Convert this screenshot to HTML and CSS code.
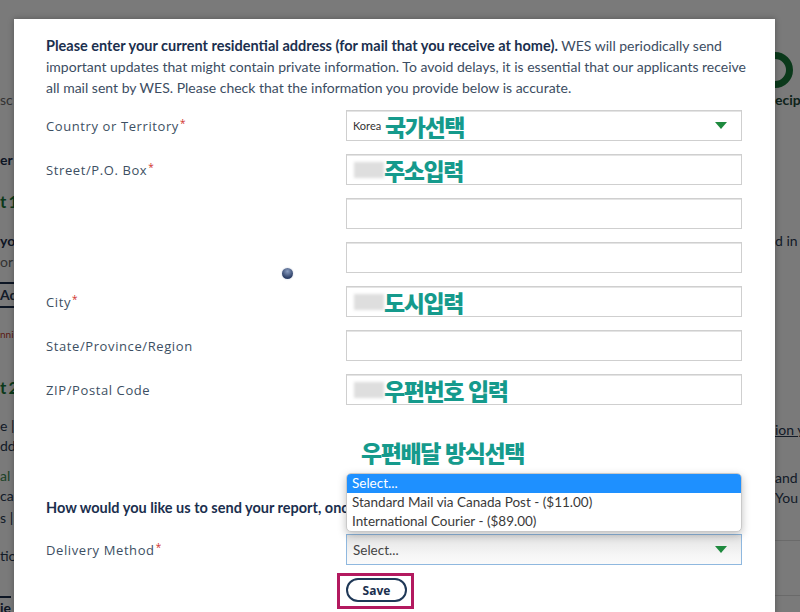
FILE: index.html
```html
<!DOCTYPE html>
<html lang="ko">
<head>
<meta charset="utf-8">
<title>Address</title>
<link rel="stylesheet" href="styles.css">
</head>
<body>
<div class="page">
  <div class="strip strip-left">
    <div class="bl bl1 muted">sc</div>
    <div class="bl bl2 bold">er</div>
    <div class="bl bl3 green big">t 1</div>
    <div class="bl bl4 bold">yo</div>
    <div class="bl bl5 muted">or</div>
    <div class="bl bl6 tab">Ad</div>
    <div class="bl bl7 red">nni</div>
    <div class="bl bl8 green big">t 2</div>
    <div class="bl bl9">e |</div>
    <div class="bl bl10">dd</div>
    <div class="bl bl11 green-l">al</div>
    <div class="bl bl12">ca</div>
    <div class="bl bl13">s |</div>
    <div class="bl bl14">tio</div>
    <div class="bl bl15 bold rule">ie</div>
  </div>
  <div class="page-mid"></div>
  <div class="strip strip-right">
    <div class="ring"></div>
    <div class="br br1 bold">ecip</div>
    <div class="br br2">d in</div>
    <div class="br br3 uline">ion y</div>
    <div class="br br4">and</div>
    <div class="br br5">You</div>
    <div class="br br6 hr"></div>
    <div class="br br7 hr"></div>
  </div>
</div>
<div class="overlay"></div>

<div class="modal">
  <p class="intro"><b>Please enter your current residential address (for mail that you receive at home).</b> WES will periodically send important updates that might contain private information. To avoid delays, it is essential that our applicants receive all mail sent by WES. Please check that the information you provide below is accurate.</p>

  <div class="form">
    <div class="label">Country or Territory<span class="req">*</span></div>
    <div class="field select"><span class="val">Korea</span><span class="note">국가선택</span><span class="arrow"></span></div>

    <div class="label">Street/P.O. Box<span class="req">*</span></div>
    <div class="field"><span class="blur"></span><span class="note">주소입력</span></div>

    <div class="label"></div>
    <div class="field"></div>

    <div class="label"></div>
    <div class="field"></div>

    <div class="label">City<span class="req">*</span></div>
    <div class="field"><span class="blur"></span><span class="note">도시입력</span></div>

    <div class="label">State/Province/Region</div>
    <div class="field"></div>

    <div class="label">ZIP/Postal Code</div>
    <div class="field"><span class="blur"></span><span class="note">우편번호 입력</span></div>
  </div>

  <div class="note-row"><span class="note">우편배달 방식선택</span></div>

  <p class="question">How would you like us to send your report, once it is complete?</p>

  <div class="form delivery">
    <div class="label">Delivery Method<span class="req">*</span></div>
    <div class="field select open">
      <span class="val2">Select...</span><span class="arrow"></span>
      <ul class="options">
        <li class="sel">Select...</li>
        <li>Standard Mail via Canada Post - ($11.00)</li>
        <li>International Courier - ($89.00)</li>
      </ul>
    </div>
  </div>

  <div class="actions">
    <div class="spacer"></div>
    <div class="save-wrap"><button class="save">Save</button></div>
  </div>

  <div class="spinner"></div>
</div>
</body>
</html>
```

FILE: styles.css
```css
html, body {
  margin: 0;
  padding: 0;
}
body {
  width: 800px;
  height: 612px;
  overflow: hidden;
  position: relative;
  font-family: Lato, "Noto Sans", sans-serif;
  background: #fff;
}

/* background page */
.page {
  display: flex;
  height: 612px;
  background: #fff;
}
.strip {
  overflow: hidden;
  display: flex;
  flex-direction: column;
  font-size: 14px;
  color: #2a3b55;
  white-space: nowrap;
  align-items: flex-start;
}
.strip-left { width: 14px; }
.page-mid { flex: 1; }
.strip-right { width: 25px; }
.bl, .br { line-height: 20px; height: 20px; }
.muted { color: #6b6b6b; }
.bold { font-weight: 700; color: #1d2f4d; }
.green { color: #17773a; font-weight: 700; }
.green-l { color: #3c8a50; }
.big { font-size: 17px; line-height: 24px; height: 24px; letter-spacing: -1px; }
.red { color: #c0392b; font-size: 10px; }
.bl1 { margin-top: 90px; }
.bl2 { margin-top: 40px; }
.bl3 { margin-top: 20px; }
.bl4 { margin-top: 17px; }
.bl5 { margin-top: 1px; }
.bl6 { margin-top: 10px; }
.tab {
  border-top: 2px solid #1d2f4d;
  border-bottom: 2px solid #1d2f4d;
  font-weight: 700;
  height: 22px;
  line-height: 22px;
  width: 20px;
}
.bl7 { margin-top: 16px; }
.bl8 { margin-top: 32px; }
.bl9 { margin-top: 16px; }
.bl10 { margin-top: 0; }
.bl11 { margin-top: 10px; }
.bl12 { margin-top: 0; }
.bl13 { margin-top: 2px; }
.bl14 { margin-top: 18px; }
.bl15 { margin-top: 30px; }
.rule { border-top: 2px solid #1d2f4d; }

.ring {
  width: 22px;
  height: 22px;
  border: 7px solid #17773a;
  border-radius: 50%;
  margin-top: 52px;
  margin-left: -18px;
  flex: none;
}
.br1 { margin-top: 2px; color: #1d4a3a; }
.br2 { margin-top: 121px; }
.br3 { margin-top: 169px; }
.uline { text-decoration: underline; }
.br4 { margin-top: 28px; }
.br5 { margin-top: 0; }
.hr { height: 0; width: 30px; border-top: 1px solid #ddd; }
.br6 { margin-top: 32px; }
.br7 { margin-top: 54px; }

.overlay {
  position: absolute;
  inset: 0;
  background: rgba(0, 0, 0, 0.52);
}

/* modal */
.modal {
  position: absolute;
  left: 14px;
  top: 19px;
  width: 761px;
  height: 620px;
  box-sizing: border-box;
  background: #fff;
  padding: 16px 32px 0 32px;
  box-shadow: 0 0 6px rgba(0,0,0,0.3);
}
.intro {
  margin: 0;
  font-size: 14px;
  line-height: 21px;
  color: #3c4d62;
  width: 700px;
}
.intro b {
  font-size: 14.5px;
}
.intro b, .question {
  color: #1b2f4e;
  font-weight: 700;
}
.form {
  display: grid;
  grid-template-columns: 300px 396px;
  grid-auto-rows: 31px;
  row-gap: 13px;
  margin-top: 12px;
}
.label {
  display: flex;
  align-items: center;
  font-family: "Open Sans", sans-serif;
  font-size: 13px;
  letter-spacing: 0.6px;
  color: #3d4f63;
}
.req {
  color: #d0312d;
  font-size: 10px;
  align-self: flex-start;
  margin-top: 6px;
  margin-left: 1px;
}
.field {
  position: relative;
  display: flex;
  align-items: center;
  box-sizing: border-box;
  height: 31px;
  border: 1px solid #cfcfcf;
  box-shadow: inset 0 1px 0 #e4e4e4;
  padding: 0 14px 0 6px;
  background: #fff;
}
.val {
  font-size: 11px;
  color: #333;
  width: 32px;
}
.blur {
  width: 30px;
  height: 16px;
  margin-left: 1px;
  background: #dedede;
  filter: blur(1.5px);
}
.note {
  font-family: "Noto Sans CJK KR", sans-serif;
  font-weight: 900;
  font-size: 23px;
  letter-spacing: -1.4px;
  color: #159a8c;
  line-height: 30px;
}
.arrow {
  margin-left: auto;
  width: 0;
  height: 0;
  border-left: 6px solid transparent;
  border-right: 6px solid transparent;
  border-top: 7px solid #1e8a3e;
}
.note-row {
  margin-top: 32px;
  padding-left: 315px;
  height: 30px;
}
.question {
  margin: 30px 0 0 0;
  font-size: 14.5px;
  line-height: 21px;
  white-space: nowrap;
}
.delivery { margin-top: 16px; }
.field.open {
  border-color: #8fb8df;
  box-shadow: none;
  background: linear-gradient(#e3e3e3, #f6f6f6 70%, #fafafa);
}
.val2 {
  font-size: 13.5px;
  color: #444;
}
.options {
  position: absolute;
  left: -1px;
  right: -1px;
  bottom: 32px;
  margin: 0;
  padding: 0;
  list-style: none;
  background: #fff;
  border: 1px solid #c9c9c9;
  border-radius: 5px;
  box-shadow: 0 3px 8px rgba(0,0,0,0.25);
  font-size: 13.5px;
  color: #3a3a3a;
  overflow: hidden;
}
.options li {
  height: 19px;
  line-height: 19px;
  padding-left: 5px;
}
.options li.sel {
  background: #1e90ff;
  color: #fff;
}
.actions {
  display: grid;
  grid-template-columns: 300px 396px;
  margin-top: 13px;
}
.save-wrap {
  position: relative;
  width: 61px;
}
.save-wrap::after {
  content: "";
  position: absolute;
  left: -9px;
  right: -7px;
  top: -5px;
  bottom: -7px;
  border: 3px solid #b3195f;
}
.save {
  display: block;
  width: 61px;
  height: 24px;
  box-sizing: border-box;
  border: 2px solid #1f3857;
  border-radius: 13px;
  background: #fff;
  font-family: "Open Sans", sans-serif;
  font-weight: 700;
  font-size: 12px;
  color: #1b2f4e;
  padding: 0;
}
.spinner {
  position: absolute;
  left: 268px;
  top: 249px;
  width: 11px;
  height: 11px;
  border-radius: 50%;
  background: radial-gradient(circle at 50% 30%, #8a9dc0, #2c3f66 70%);
  box-shadow: 0 0 2px #c0c8d8;
}
```
